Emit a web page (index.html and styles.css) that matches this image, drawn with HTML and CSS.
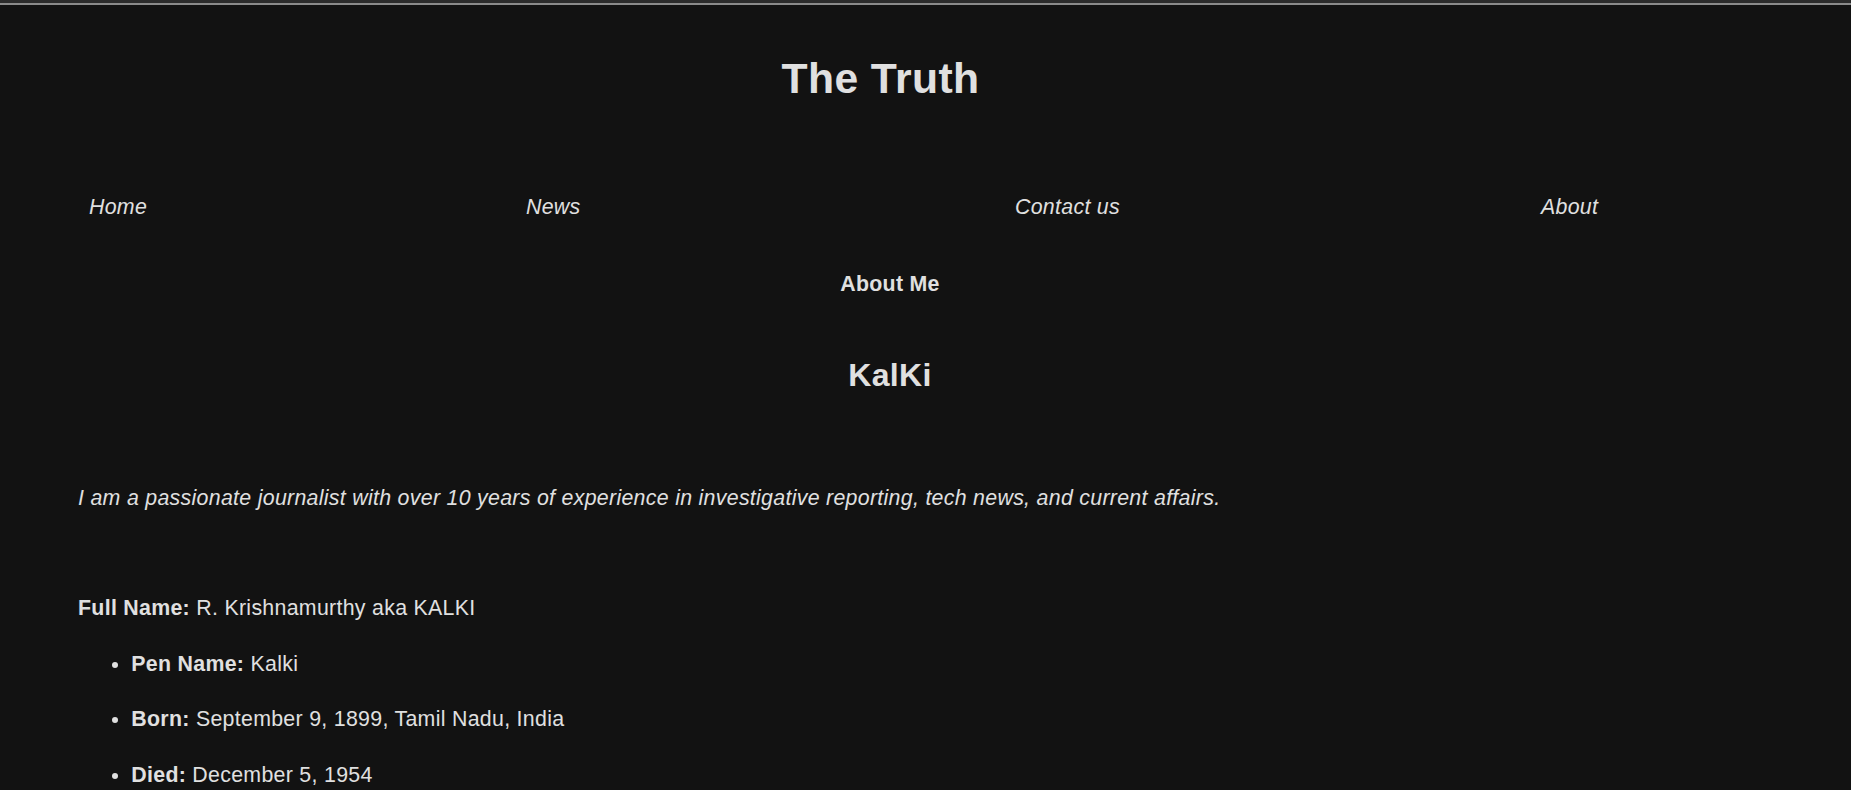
FILE: index.html
```html
<!DOCTYPE html>
<html lang="en">
<head>
<meta charset="utf-8">
<title>The Truth - About</title>
<link rel="stylesheet" href="styles.css">
</head>
<body>
<div class="topbar"></div>
<header class="site-header">
  <h1 class="site-title">The Truth</h1>
  <nav class="nav">
    <a href="#" class="nav-link">Home</a>
    <a href="#" class="nav-link">News</a>
    <a href="#" class="nav-link">Contact us</a>
    <a href="#" class="nav-link">About</a>
  </nav>
</header>
<main class="about">
  <h3 class="about-title">About Me</h3>
  <h2 class="about-name">KalKi</h2>
  <p class="intro">I am a passionate journalist with over 10 years of experience in investigative reporting, tech news, and current affairs.</p>
  <p class="fullname"><strong>Full Name:</strong> R. Krishnamurthy aka KALKI</p>
  <ul class="facts">
    <li><strong>Pen Name:</strong> Kalki</li>
    <li><strong>Born:</strong> September 9, 1899, Tamil Nadu, India</li>
    <li><strong>Died:</strong> December 5, 1954</li>
  </ul>
</main>
</body>
</html>
```

FILE: styles.css
```css
html, body {
  margin: 0;
  padding: 0;
}
body {
  background: #121212;
  color: #e0e0e0;
  font-family: "Liberation Sans", Arial, sans-serif;
  font-size: 21.33px;
  line-height: 34.13px;
  letter-spacing: 0.3px;
}
.topbar {
  height: 3px;
  background: #2b2b2b;
  border-bottom: 2px solid #8a8a8a;
}
.site-title {
  margin: 38.8px 90px 0 0;
  text-align: center;
  font-size: 42.67px;
  line-height: 68.27px;
  font-weight: bold;
  letter-spacing: 0.4px;
}
.nav {
  display: grid;
  grid-template-columns: 437px 489px 526px auto;
  padding-left: 89px;
  margin-top: 77.8px;
  font-style: italic;
}
.nav-link {
  color: #e0e0e0;
  text-decoration: none;
}
.about {
  padding: 0 149px 0 78px;
}
.about-title {
  margin: 42.9px 0 0;
  font-size: 21.33px;
  font-weight: bold;
  text-align: center;
}
.about-name {
  margin: 48.7px 0 0;
  font-size: 32px;
  line-height: 51.2px;
  font-weight: bold;
  text-align: center;
}
.intro {
  margin: 80.5px 0 0;
  font-style: italic;
}
.fullname {
  margin: 75.9px 0 0;
}
.facts {
  margin: 21.33px 0 0;
  padding-left: 53.3px;
}
.facts li {
  margin-top: 21.33px;
}
```
